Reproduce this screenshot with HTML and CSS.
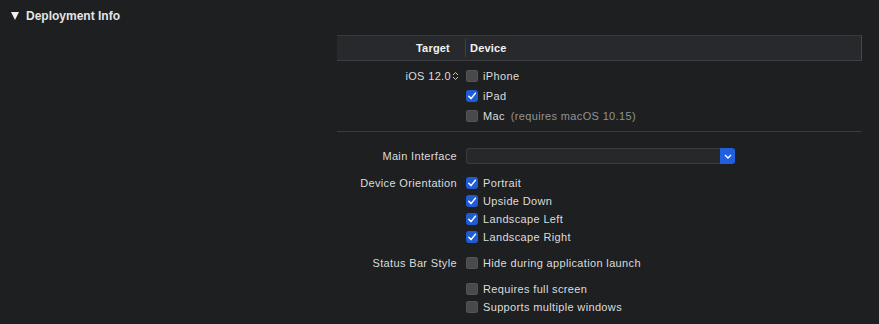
FILE: index.html
```html
<!DOCTYPE html>
<html>
<head>
    <title>Deployment Info</title>
    <link rel="stylesheet" href="styles.css">
</head>
<body>
    <div class="section-title">
        <span class="disclosure"></span>
        <span>Deployment Info</span>
    </div>

    <div class="panel">
        <div class="table-head">
            <div class="head-cell head-target">Target</div>
            <div class="head-cell head-device">Device</div>
        </div>

        <div class="form-grid target-rows">
            <div class="label">
                iOS 12.0
                <svg class="stepper" width="7" height="10" viewBox="0 0 7 10">
                    <path d="M1 4 L3.5 1.5 L6 4 M1 6 L3.5 8.5 L6 6" fill="none" stroke="#c8c8c8" stroke-width="1"/>
                </svg>
            </div>
            <label class="check"><span class="box"></span>iPhone</label>

            <div class="label"></div>
            <label class="check"><span class="box checked"></span>iPad</label>

            <div class="label"></div>
            <label class="check"><span class="box"></span>Mac<span class="note">(requires macOS 10.15)</span></label>
        </div>

        <div class="separator"></div>

        <div class="form-grid popup-rows">
            <div class="label row-popup">Main Interface</div>
            <div class="popup">
                <span class="popup-field"></span>
                <span class="popup-arrow">
                    <svg width="8" height="5" viewBox="0 0 8 5">
                        <path d="M1 1 L4 4 L7 1" fill="none" stroke="#fff" stroke-width="1.4"/>
                    </svg>
                </span>
            </div>
        </div>

        <div class="form-grid orient-rows">
            <div class="label">Device Orientation</div>
            <label class="check"><span class="box checked"></span>Portrait</label>
            <div class="label"></div>
            <label class="check"><span class="box checked"></span>Upside Down</label>
            <div class="label"></div>
            <label class="check"><span class="box checked"></span>Landscape Left</label>
            <div class="label"></div>
            <label class="check"><span class="box checked"></span>Landscape Right</label>
        </div>

        <div class="form-grid status-rows">
            <div class="label">Status Bar Style</div>
            <label class="check"><span class="box"></span>Hide during application launch</label>
        </div>

        <div class="form-grid extra-rows">
            <div class="label"></div>
            <label class="check"><span class="box"></span>Requires full screen</label>
            <div class="label"></div>
            <label class="check"><span class="box"></span>Supports multiple windows</label>
        </div>
    </div>
</body>
</html>
```

FILE: styles.css
```css
body {
    margin: 0;
    background: #1e1f21;
    color: #dcdcdd;
    font-family: "Liberation Sans", Arial, sans-serif;
    font-size: 11px;
    letter-spacing: 0.35px;
    width: 879px;
    height: 324px;
    overflow: hidden;
}

.section-title {
    display: flex;
    align-items: center;
    height: 16px;
    padding-top: 8px;
    padding-left: 11px;
    font-size: 12px;
    font-weight: bold;
    letter-spacing: 0;
    color: #e4e4e5;
}

.disclosure {
    width: 0;
    height: 0;
    border-left: 4.5px solid transparent;
    border-right: 4.5px solid transparent;
    border-top: 8px solid #f0f0f0;
    margin-right: 7px;
}

.panel {
    margin-left: 337px;
    width: 525px;
    margin-top: 11px;
}

/* table header */
.table-head {
    display: flex;
    height: 24px;
    background: #27292c;
    border-top: 1px solid #37393c;
    border-bottom: 1px solid #3c3e41;
    border-right: 1px solid #45474a;
    font-weight: bold;
    letter-spacing: 0.2px;
    color: #f2f2f2;
}

.head-cell {
    display: flex;
    align-items: center;
}

.head-target {
    width: 113px;
    justify-content: flex-end;
    padding-right: 15px;
    border-right: 1px solid #3f4144;
    margin: 3px 0;
}

.head-device {
    padding-left: 4px;
}

/* label / control grid */
.form-grid {
    display: grid;
    grid-template-columns: 120px 1fr;
    column-gap: 9px;
    align-items: center;
}

.label {
    display: flex;
    align-items: center;
    justify-content: flex-end;
    height: 18px;
    white-space: nowrap;
}

.stepper {
    margin-left: 1px;
    margin-right: -2px;
}

.check {
    display: flex;
    align-items: center;
    height: 18px;
    white-space: nowrap;
    color: #dcdcdd;
}

.box {
    width: 12px;
    height: 12px;
    border-radius: 3px;
    background: #4a4a4d;
    box-shadow: inset 0 0 0 1px #535457;
    margin-right: 5px;
    flex-shrink: 0;
}

.box.checked {
    background: #1f5bd6 url("data:image/svg+xml,%3Csvg xmlns='http://www.w3.org/2000/svg' width='12' height='12' viewBox='0 0 12 12'%3E%3Cpath d='M2.8 6.2 L5 8.6 L9.4 3.2' fill='none' stroke='white' stroke-width='1.5' stroke-linecap='round' stroke-linejoin='round'/%3E%3C/svg%3E") no-repeat center;
    box-shadow: none;
}

.note {
    color: #939395;
    margin-left: 6px;
}

.target-rows {
    padding-top: 6px;
    row-gap: 2px;
}

.separator {
    height: 1px;
    background: #3a3b3e;
    margin-top: 6px;
}

.row-popup {
    height: 16px;
}

.popup-rows {
    margin-top: 16px;
}

.popup {
    display: flex;
    width: 269px;
    height: 16px;
}

.popup-field {
    flex: 1;
    background: #27282a;
    border: 1px solid #3b3c3f;
    border-right: none;
    border-radius: 3px 0 0 3px;
}

.popup-arrow {
    width: 15px;
    display: flex;
    align-items: center;
    justify-content: center;
    background: #1f5fe0;
    border-radius: 0 3px 3px 0;
}

.orient-rows {
    margin-top: 10px;
}

.status-rows {
    margin-top: 8px;
}

.extra-rows {
    margin-top: 8px;
}
```
